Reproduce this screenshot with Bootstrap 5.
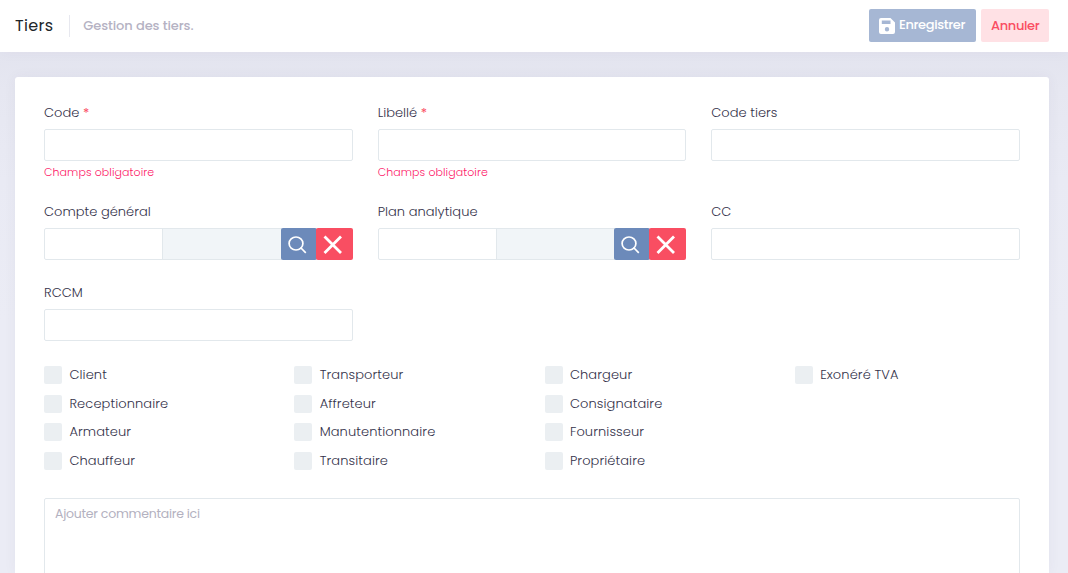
<!DOCTYPE html>
<html lang="fr">
<head>
<meta charset="utf-8">
<meta name="viewport" content="width=device-width, initial-scale=1">
<title>Tiers</title>
<link href="https://cdn.jsdelivr.net/npm/bootstrap@5.3.0/dist/css/bootstrap.min.css" rel="stylesheet">
<style>
body{font-family:Poppins,Inter,"Open Sans",sans-serif;font-size:13px;line-height:20px;font-weight:300;color:#34324a;background:linear-gradient(#e3e4ef 52px,#e6e7f1 90px,#e9eaf4 180px,#ebecf5 320px)}
.topbar{height:52px;padding:0 19px 0 15px;box-shadow:0 0 14px rgba(82,63,105,.04)}
.topbar h1{font-size:16px;line-height:20px;font-weight:400;color:#212529;letter-spacing:.3px}
.sep{width:1px;height:22px;background:#e7e8ef;margin:0 13px 0 16px}
.subtitle{color:#b5b2c3;font-weight:500;letter-spacing:-.1px}
.topbar .btn{height:33px;border:0;border-radius:2px;font-size:13px;font-weight:500;line-height:20px;padding:0 10px;margin-bottom:1px;white-space:nowrap}
.btn-save{background:#a6b7d4!important;color:#fff!important;width:107px;margin-right:5px;letter-spacing:-.38px}
.save-text{margin:-1px 0 0 4px}
.btn-cancel{background:#ffe1e5!important;color:#fa4d62!important;width:68px;letter-spacing:-.35px}
.panel{margin:25px 19px 0 15px;padding:25px 29px 0;height:496px;overflow:hidden;border-radius:3px 3px 0 0;box-shadow:0 0 13px rgba(82,63,105,.05)}
.fields{--bs-gutter-x:25px}
.field-label{display:block;height:27px;line-height:21px;margin:0;letter-spacing:.03px}
.req{color:#fa4d62;font-weight:400}
.form-control{height:32px;border:1px solid #e2e8ec;border-radius:2px;padding:5px 10px;font-size:13px;box-shadow:none!important}
.help{font-size:11px;line-height:16px;padding-top:3px;color:#fd2068;letter-spacing:.08px}
.row-tall{height:99px}
.row-mid{height:81px}
.row-last{height:82px}
.form-control.lookup-label{background:#f1f5f8!important}
.input-group .btn{height:32px;border:0;padding:0;border-radius:2px!important;display:flex;align-items:center}
.btn-search{width:36px;background:#6c8aba!important}
.btn-clear{width:37px;background:#f94e62!important}
.check{height:28.6px;display:flex;align-items:flex-start;letter-spacing:.1px}
.check .form-check-input{width:18px;height:18px;margin:0 7.4px 0 0;border:0;border-radius:2px;background-color:#ebeff2}
.check label{line-height:18px}
.checks{padding-top:2px;height:134px}
.form-control.comment{height:120px;resize:none;line-height:19px}
.comment::placeholder{color:#b3b1c0;opacity:1;font-weight:400;font-size:12.5px;letter-spacing:-.25px}
</style>
</head>
<body class="vh-100 overflow-hidden">
<header class="topbar bg-white d-flex align-items-center">
  <h1 class="m-0">Tiers</h1>
  <div class="sep"></div>
  <div class="subtitle">Gestion des tiers.</div>
  <button class="btn btn-save ms-auto d-flex align-items-center" type="button">
    <svg class="flex-shrink-0" width="16" height="16" viewBox="0 0 16 16"><path fill="#fff" fill-rule="evenodd" d="M2 0H11.500L16 4.500V14a2 2 0 0 1-2 2H2a2 2 0 0 1-2-2V2a2 2 0 0 1 2-2ZM2.800 2.500V6h8.700V2.500ZM8 9a2.200 2.200 0 1 0 0 4.400 2.200 2.200 0 0 0 0-4.400Z"/></svg>
    <span class="save-text">Enregistrer</span>
  </button>
  <button class="btn btn-cancel" type="button">Annuler</button>
</header>
<main class="panel bg-white">
  <div class="row fields row-tall">
    <div class="col-4"><label class="field-label" for="code">Code <span class="req">*</span></label><input id="code" class="form-control"><div class="help">Champs obligatoire</div></div>
    <div class="col-4"><label class="field-label" for="lib">Libellé <span class="req">*</span></label><input id="lib" class="form-control"><div class="help">Champs obligatoire</div></div>
    <div class="col-4"><label class="field-label" for="ct">Code tiers</label><input id="ct" class="form-control"></div>
  </div>
  <div class="row fields row-mid">
    <div class="col-4"><label class="field-label" for="cg">Compte général</label>
      <div class="input-group flex-nowrap"><input id="cg" class="form-control"><input class="form-control lookup-label" disabled aria-label="Intitulé">
        <button class="btn btn-search" type="button" aria-label="Rechercher"><svg width="35" height="32" viewBox="0 0 35 32" fill="none" stroke="#fff" stroke-width="1.700"><ellipse cx="15" cy="15.500" rx="6.900" ry="6.500"/><path d="M19.500 19.500 24.800 24.800"/></svg></button>
        <button class="btn btn-clear" type="button" aria-label="Effacer"><svg width="37" height="32" viewBox="0 0 37 32" fill="none" stroke="#fff" stroke-width="2.800"><path d="M8.500 8.500 25 25M25 8.500 8.500 25"/></svg></button></div></div>
    <div class="col-4"><label class="field-label" for="pa">Plan analytique</label>
      <div class="input-group flex-nowrap"><input id="pa" class="form-control"><input class="form-control lookup-label" disabled aria-label="Intitulé">
        <button class="btn btn-search" type="button" aria-label="Rechercher"><svg width="35" height="32" viewBox="0 0 35 32" fill="none" stroke="#fff" stroke-width="1.700"><ellipse cx="15" cy="15.500" rx="6.900" ry="6.500"/><path d="M19.500 19.500 24.800 24.800"/></svg></button>
        <button class="btn btn-clear" type="button" aria-label="Effacer"><svg width="37" height="32" viewBox="0 0 37 32" fill="none" stroke="#fff" stroke-width="2.800"><path d="M8.500 8.500 25 25M25 8.500 8.500 25"/></svg></button></div></div>
    <div class="col-4"><label class="field-label" for="cc">CC</label><input id="cc" class="form-control"></div>
  </div>
  <div class="row fields row-last">
    <div class="col-4"><label class="field-label" for="rccm">RCCM</label><input id="rccm" class="form-control"></div>
  </div>
  <div class="row fields checks">
    <div class="col-3">
      <div class="check"><input class="form-check-input" type="checkbox" id="k1"><label for="k1">Client</label></div>
      <div class="check"><input class="form-check-input" type="checkbox" id="k2"><label for="k2">Receptionnaire</label></div>
      <div class="check"><input class="form-check-input" type="checkbox" id="k3"><label for="k3">Armateur</label></div>
      <div class="check"><input class="form-check-input" type="checkbox" id="k4"><label for="k4">Chauffeur</label></div>
    </div>
    <div class="col-3">
      <div class="check"><input class="form-check-input" type="checkbox" id="k5"><label for="k5">Transporteur</label></div>
      <div class="check"><input class="form-check-input" type="checkbox" id="k6"><label for="k6">Affreteur</label></div>
      <div class="check"><input class="form-check-input" type="checkbox" id="k7"><label for="k7">Manutentionnaire</label></div>
      <div class="check"><input class="form-check-input" type="checkbox" id="k8"><label for="k8">Transitaire</label></div>
    </div>
    <div class="col-3">
      <div class="check"><input class="form-check-input" type="checkbox" id="k9"><label for="k9">Chargeur</label></div>
      <div class="check"><input class="form-check-input" type="checkbox" id="k10"><label for="k10">Consignataire</label></div>
      <div class="check"><input class="form-check-input" type="checkbox" id="k11"><label for="k11">Fournisseur</label></div>
      <div class="check"><input class="form-check-input" type="checkbox" id="k12"><label for="k12">Propriétaire</label></div>
    </div>
    <div class="col-3">
      <div class="check"><input class="form-check-input" type="checkbox" id="k13"><label for="k13">Exonéré TVA</label></div>
    </div>
  </div>
  <textarea class="form-control comment" placeholder="Ajouter commentaire ici" aria-label="Commentaire"></textarea>
</main>
<script src="https://cdn.jsdelivr.net/npm/bootstrap@5.3.0/dist/js/bootstrap.bundle.min.js"></script>
</body>
</html>
